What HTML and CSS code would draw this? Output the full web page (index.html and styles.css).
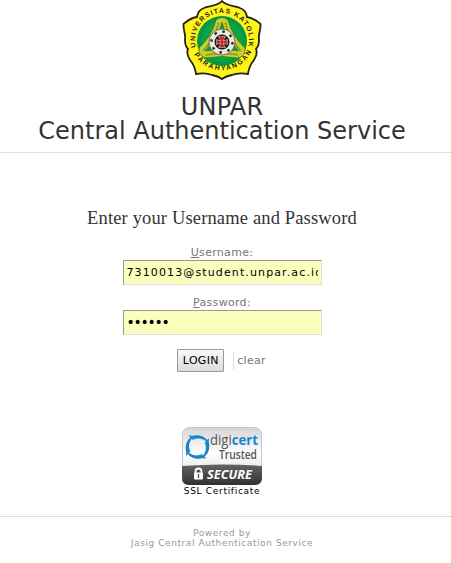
FILE: index.html
```html
<!DOCTYPE html>
<html lang="en">
<head>
<meta charset="utf-8">
<title>UNPAR Central Authentication Service</title>
<link rel="stylesheet" href="styles.css">
</head>
<body>
<header class="header">
  <svg class="crest" width="80" height="80" viewBox="0 0 80 80" role="img" aria-label="Universitas Katolik Parahyangan">
    <defs>
      <path id="top-arc" d="M14.200 48A27 27 0 1 1 65.800 48"/>
      <path id="bottom-arc" d="M9.500 49A32.500 32.500 0 0 0 70.500 49"/>
    </defs>
    <path d="M40 1C44 6 53 6 58 8Q64 10 65 17Q72 18 78.500 24C79 30 76 34 77 40Q77 46 74 49Q76 54 72 60Q67 66 66 74C60 73 55 73 50 75Q44 76 40 79Q36 76 30 75C25 73 20 73 14 74Q13 66 8 60Q4 54 6 49Q3 46 3 40C4 34 1 30 1.500 24Q8 18 15 17Q16 10 22 8C27 6 36 6 40 1Z" fill="#fff31a" stroke="#252514" stroke-width="1.800"/>
    <circle cx="40" cy="41" r="25" fill="#08a54a"/>
    <circle cx="40" cy="41" r="22.500" fill="none" stroke="#078a40" stroke-width="4" stroke-dasharray="1 1"/>
    <path d="M34 20Q40 15 46 20Q50 36 63 48Q64 57 55 58Q40 55 25 58Q16 57 17 48Q30 36 34 20Z" fill="#c9cf2c" stroke="#45731a" stroke-width=".8"/>
    <path d="M36.500 23Q33 38 21 51M43.500 23Q47 38 59 51M24 55Q40 52 56 55" fill="none" stroke="#4d7420" stroke-width="1.800" stroke-dasharray=".8 .8"/>
    <path d="M40 22Q44 38 57 51Q40 48 23 51Q36 38 40 22Z" fill="#079b49" stroke="#526c1d" stroke-width=".6"/>
    <circle cx="40" cy="42" r="13" fill="#e9e9e1" stroke="#555" stroke-width=".8"/>
    <circle cx="40" cy="42" r="10.500" fill="none" stroke="#252525" stroke-width="2.300" stroke-dasharray="2.500 5.750"/>
    <circle cx="40" cy="42" r="7.500" fill="#171717"/>
    <path d="M36.500 36.500H43.500L41 41L45.500 39.500V44.500L41 43L43.500 47.500H36.500L39 43L34.500 44.500V39.500L39 41Z" fill="#c92525" stroke="#f5f5ed" stroke-width=".5"/>
    <g class="crest-text">
      <text><textPath href="#top-arc" startOffset="1" textLength="98" lengthAdjust="spacing">UNIVERSITAS KATOLIK</textPath></text>
      <text><textPath href="#bottom-arc" startOffset="6" textLength="70" lengthAdjust="spacing">PARAHYANGAN</textPath></text>
    </g>
  </svg>
  <h1 class="title"><span class="title-short">UNPAR</span><span class="title-long">Central Authentication Service</span></h1>
</header>
<main class="content">
  <h2 class="prompt">Enter your Username and Password</h2>
  <form class="form">
    <label class="label" for="username"><u>U</u>sername:</label>
    <input class="field" id="username" type="text" value="7310013@student.unpar.ac.id">
    <label class="label" for="password"><u>P</u>assword:</label>
    <div class="field dots" id="password">••••••</div>
    <div class="actions"><button class="login" type="button">LOGIN</button><button class="clear" type="reset">clear</button></div>
  </form>
  <div class="seal">
    <svg class="seal-image" width="80" height="59" viewBox="0 0 80 59" role="img" aria-label="digicert Trusted Secure">
      <defs>
        <linearGradient id="silver" x1="0" y1="0" x2="0" y2="1"><stop stop-color="#d5d5d7"/><stop offset=".45" stop-color="#fff"/><stop offset="1" stop-color="#d8d8da"/></linearGradient>
        <linearGradient id="dark" x1="0" y1="0" x2="0" y2="1"><stop stop-color="#646467"/><stop offset="1" stop-color="#303033"/></linearGradient>
        <path id="swoosh" d="M-5.500 -11C0 -13 7 -11 9.500 -7L11.500 -9L11 -2.500C8 -8 1 -10 -5 -7Z"/>
      </defs>
      <rect x=".5" y=".5" width="79" height="57" rx="7" fill="url(#silver)" stroke="#c6c6c9"/>
      <path d="M0 39Q40 36 80 39V51Q80 58 73 58H7Q0 58 0 51Z" fill="url(#dark)"/>
      <g fill="#1685ca" transform="translate(15.500 20)"><use href="#swoosh"/><use href="#swoosh" transform="rotate(90)"/><use href="#swoosh" transform="rotate(180)"/><use href="#swoosh" transform="rotate(270)"/></g>
      <text class="seal-brand" x="28" y="18" textLength="48" lengthAdjust="spacingAndGlyphs">digi<tspan class="seal-cert">cert</tspan></text>
      <text class="seal-trusted" x="37" y="31.500" textLength="38" lengthAdjust="spacingAndGlyphs">Trusted</text>
      <path d="M13.500 46V44.500A3 3 0 0 1 19.500 44.500V46" fill="none" stroke="#fff" stroke-width="1.800"/>
      <rect x="12" y="45.500" width="9" height="7" rx="1" fill="#fff"/>
      <path d="M16.500 47V51" stroke="#444" stroke-width="1.300"/>
      <text class="seal-secure" x="25" y="51.500" textLength="45" lengthAdjust="spacingAndGlyphs">SECURE</text>
    </svg>
    <div class="seal-caption">SSL Certificate</div>
  </div>
</main>
<footer class="footer"><div class="powered">Powered by</div><div class="product">Jasig Central Authentication Service</div></footer>
</body>
</html>
```

FILE: styles.css
```css
* { box-sizing: border-box; }
body { margin: 0; height: 563px; overflow: hidden; background: #fff; font-family: "DejaVu Sans", sans-serif; text-align: center; }
.header { height: 153px; padding-right: 7px; border-bottom: 1px solid #ddd; }
.crest { display: block; margin: 0 auto; overflow: visible; }
.crest-text { font: bold 6.8px "Liberation Sans", sans-serif; fill: #222314; }
.title { margin: 15px 0 0; font-size: 24px; line-height: 24px; font-weight: 400; color: #333; white-space: nowrap; }
.title-short, .title-long { display: block; }
.title-short { letter-spacing: .2px; }
.content { padding-right: 7px; height: 363px; }
.prompt { margin: 0; padding-top: 53px; font: 400 18.5px/24px "Liberation Serif", serif; letter-spacing: .15px; color: #333; }
.form { display: flex; flex-direction: column; align-items: center; padding-top: 16px; }
.label { height: 14px; font-size: 11px; line-height: 14px; letter-spacing: .3px; color: #777; }
.field { width: 199px; height: 25px; margin: 0 0 11px; padding: 1px 3px; border: 1px solid; border-color: #999 #ddd #ddd #999; border-radius: 0; background: #faffbd; color: #000; font: 11px/21px "DejaVu Sans", sans-serif; letter-spacing: 1.12px; text-align: left; }
.dots { font-size: 14px; letter-spacing: -1.25px; }
.actions { display: flex; align-items: center; height: 23px; margin: 3px 1px 0 0; }
.login { width: 47px; height: 23px; padding: 0; border: 1px solid #999; border-radius: 1px; background: linear-gradient(#f8f8f8, #dcdcdc); color: #000; font: 11px "DejaVu Sans", sans-serif; letter-spacing: .3px; }
.clear { height: 19px; margin-left: 9px; padding: 0 0 0 3px; border: 0; border-left: 1px solid #ddd; background: none; color: #777; font: 11px "DejaVu Sans", sans-serif; letter-spacing: .25px; }
.seal { padding-top: 55px; }
.seal-image { display: block; margin: 0 auto; overflow: visible; }
.seal-brand { font: 14px "Open Sans", sans-serif; fill: #555; }
.seal-cert { font-weight: 700; fill: #1685ca; }
.seal-trusted { font: 600 12px "Open Sans", sans-serif; fill: #555; }
.seal-secure { font: italic 700 12px "Open Sans", sans-serif; fill: #fff; }
.seal-caption { font-size: 9px; line-height: 10px; letter-spacing: .7px; color: #000; }
.footer { height: 47px; padding: 11px 7px 0 0; border-top: 1px solid #ddd; font-size: 9px; line-height: 10px; letter-spacing: .57px; color: #999; }
```
